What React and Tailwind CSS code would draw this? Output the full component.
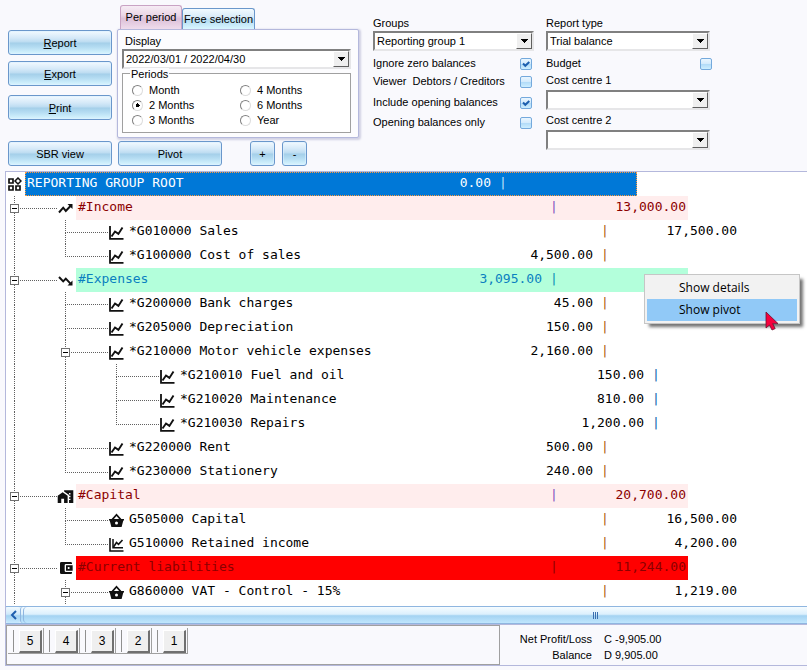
import React from "react";
import { MdHomeWork, MdAccountBalanceWallet } from "react-icons/md";

const glossy =
  "rounded-[3px] border border-[#6a97cb] bg-[linear-gradient(to_bottom,#f2faff_0%,#d5e9f8_30%,#bcdcf1_48%,#a4cfe9_52%,#b4dcf2_70%,#d9f6ff_100%)] text-center leading-[22px] shadow-[inset_0_0_0_1px_rgba(220,240,255,0.6)]";

function GlossyButton({ className = "", children, ...rest }) {
  return (
    <button type="button" className={`${glossy} h-[25px] ${className}`} {...rest}>
      {children}
    </button>
  );
}

function Select({ id, options, className = "", ...rest }) {
  return (
    <div
      className={`relative h-5 border-2 border-t-[#808080] border-l-[#808080] border-r-[#e6e6e8] border-b-[#e6e6e8] bg-white ${className}`}
    >
      <select id={id} className="block h-4 w-full appearance-none bg-white pl-0.5 leading-4 outline-none" {...rest}>
        {options.map((o) => (
          <option key={o}>{o}</option>
        ))}
      </select>
      <span className="pointer-events-none absolute top-0 right-0 flex h-4 w-4 items-center justify-center border border-t-white border-l-white border-r-[#606060] border-b-[#606060] bg-[#efefef]">
        <svg width="7" height="4" viewBox="0 0 7 4" shapeRendering="crispEdges">
          <path d="M0 0h7v1H6v1H5v1H4v1H3V3H2V2H1V1H0z" fill="#000" />
        </svg>
      </span>
    </div>
  );
}

function Check({ id, label, defaultChecked, className = "" }) {
  return (
    <div className={`flex items-center justify-between ${className}`}>
      <label htmlFor={id} className="whitespace-pre">
        {label}
      </label>
      <span className="relative h-3 w-3">
        <input
          id={id}
          type="checkbox"
          defaultChecked={defaultChecked}
          className="peer block h-3 w-3 appearance-none rounded-[2px] border border-[#74a9dc] bg-[linear-gradient(to_bottom,#eaf6ff_0%,#d2eafc_50%,#b3dcf8_55%,#cdeeff_100%)]"
        />
        <svg
          className="pointer-events-none absolute top-0 left-0 hidden peer-checked:block"
          width="12"
          height="12"
          viewBox="0 0 12 12"
        >
          <path d="M3 5.5l2.3 2.3L9.3 4" fill="none" stroke="#1d5fae" strokeWidth="2" />
        </svg>
      </span>
    </div>
  );
}

function Radio({ label, defaultChecked }) {
  return (
    <label className="flex h-[15px] items-center gap-1.5">
      <input
        type="radio"
        name="period"
        defaultChecked={defaultChecked}
        className="h-[11px] w-[11px] appearance-none rounded-full border border-t-[#808080] border-l-[#808080] border-r-[#dcdcdc] border-b-[#dcdcdc] bg-white checked:bg-[radial-gradient(circle,#000_0_2px,#fff_2px)]"
      />
      {label}
    </label>
  );
}

function Icon({ children }) {
  return (
    <svg width="15" height="15" viewBox="0 0 15 15" fill="none" stroke="currentColor">
      {children}
    </svg>
  );
}

const icons = {
  root: (
    <Icon>
      <path d="M2 2h4v4H2zM2 9h4v4H2zM9 9h4v4H9z" strokeWidth="1.7" />
      <path d="M11 1l3 3-3 3-3-3z" strokeWidth="1.5" />
    </Icon>
  ),
  up: (
    <Icon>
      <path d="M1 11.5l4.2-4.8 2.6 3.2L12.5 5" strokeWidth="2" />
      <path d="M9.5 3H14.5V8z" fill="currentColor" stroke="none" />
    </Icon>
  ),
  down: (
    <Icon>
      <path d="M1 4l4.2 4.4 2.6-2.8 4.7 5" strokeWidth="2" />
      <path d="M9.5 12.5H14.5V7.5z" fill="currentColor" stroke="none" />
    </Icon>
  ),
  home: <MdHomeWork size={17} />,
  basket: (
    <Icon>
      <path
        d="M0 6h2.6L7.5.6 12.4 6H15v1.6h-.7L12.6 14H2.4L.7 7.600H0zM7.500 3L4.900 6h5.200zM7.500 8.400a1.500 1.500 0 100 3 1.500 1.500 0 000-3z"
        fill="currentColor"
        fillRule="evenodd"
        stroke="none"
      />
    </Icon>
  ),
  wallet: <MdAccountBalanceWallet size={16} />,
  chart: (
    <Icon>
      <path d="M1 1v12.8h13.5" strokeWidth="1.8" />
      <path d="M2.5 11.5L6 6.500l3.400 2.400L13.500 2.500" strokeWidth="1.9" />
    </Icon>
  ),
  stacked: (
    <Icon>
      <path d="M1 1v13h13.5" strokeWidth="1.6" />
      <path d="M4 2v8.800h10" strokeWidth="1.5" />
      <path d="M4.500 10l3-4.500 2 1.800L13.500 3" strokeWidth="1.6" />
    </Icon>
  ),
};

const rose = "bg-[#ffeded] text-[#8b0000]";

// Guide codes, one per level: "|" passes through, "+" branches, "L" ends.
const rows = [
  { guides: "", icon: "root", label: "REPORTING GROUP ROOT", debit: "0.00", tone: "bg-[#0078d7] text-white outline-1 -outline-offset-1 outline-dotted outline-[#ff9a3c]", bar: "text-[#bfe0fa]" },
  { guides: "+", open: true, icon: "up", label: "#Income", credit: "13,000.00", tone: rose, bar: "text-[#8050c0]" },
  { guides: "|+", icon: "chart", label: "*G010000 Sales", credit: "17,500.00" },
  { guides: "|L", icon: "chart", label: "*G100000 Cost of sales", debit: "4,500.00" },
  { guides: "+", open: true, icon: "down", label: "#Expenses", debit: "3,095.00", tone: "bg-[#b3ffdb] text-[#0a80c0]", bar: "text-[#0a90b8]" },
  { guides: "|+", icon: "chart", label: "*G200000 Bank charges", debit: "45.00" },
  { guides: "|+", icon: "chart", label: "*G205000 Depreciation", debit: "150.00" },
  { guides: "|+", open: true, icon: "chart", label: "*G210000 Motor vehicle expenses", debit: "2,160.00" },
  { guides: "||+", icon: "chart", label: "*G210010 Fuel and oil", debit: "150.00", bar: "text-[#1068b0]" },
  { guides: "||+", icon: "chart", label: "*G210020 Maintenance", debit: "810.00", bar: "text-[#1068b0]" },
  { guides: "||L", icon: "chart", label: "*G210030 Repairs", debit: "1,200.00", bar: "text-[#1068b0]" },
  { guides: "|+", icon: "chart", label: "*G220000 Rent", debit: "500.00" },
  { guides: "|L", icon: "chart", label: "*G230000 Stationery", debit: "240.00" },
  { guides: "+", open: true, icon: "home", label: "#Capital", credit: "20,700.00", tone: rose, bar: "text-[#8050c0]" },
  { guides: "|+", icon: "basket", label: "G505000 Capital", credit: "16,500.00" },
  { guides: "|L", icon: "stacked", label: "G510000 Retained income", credit: "4,200.00" },
  { guides: "+", open: true, icon: "wallet", label: "#Current liabilities", credit: "11,244.00", tone: "bg-[#ff0000] text-[#8b0000]", bar: "text-[#8b0000]" },
  { guides: "|+", open: true, icon: "basket", label: "G860000 VAT - Control - 15%", credit: "1,219.00" },
];

function Guide({ code, open }) {
  const branch = code === "+" || code === "L";
  return (
    <span className="relative flex h-6 w-[51px] shrink-0 flex-col pl-2">
      <span className={`h-[13px] border-l border-dotted border-[#606060] ${branch ? "border-b" : ""}`} />
      {code !== "L" && <span className="h-[11px] border-l border-dotted border-[#606060]" />}
      {open && (
        <button
          type="button"
          aria-label="Collapse"
          className="absolute top-2 left-1 flex h-[9px] w-[9px] items-center justify-center border border-[#707070] bg-white"
        >
          <span className="h-px w-[5px] bg-black" />
        </button>
      )}
    </span>
  );
}

function TreeRow({ row }) {
  const levels = row.guides.split("");
  return (
    <li className="flex h-6">
      {levels.map((code, i) => (
        <Guide key={i} code={code} open={row.open && i === levels.length - 1} />
      ))}
      <span className="flex w-[19px] shrink-0 items-center justify-center pr-0.5 text-[#111]">{icons[row.icon]}</span>
      <span className={`flex w-[612px] shrink-0 px-0.5 leading-[22px] ${row.tone || "text-black"}`}>
        <span className="flex-1 whitespace-pre">{row.label}</span>
        <span>{row.debit}</span>
        <span className={`mr-4 ml-2 w-2 text-center ${row.bar || "text-[#b05c10]"}`}>|</span>
        <span className="w-28 text-right">{row.credit}</span>
      </span>
    </li>
  );
}

export default function App() {
  return (
    <div className="relative overflow-hidden bg-[#f9f9fd] pb-1 font-['Liberation_Sans',Arial,sans-serif] text-[11px] leading-[15px] text-black">
      <header className="flex">
        <div className="ml-2 shrink-0">
          <div className="flex gap-[5px]">
            <div className="flex w-[104px] flex-col pt-[30px]">
              <GlossyButton><u>R</u>eport</GlossyButton>
              <GlossyButton className="mt-1.5"><u>E</u>xport</GlossyButton>
              <GlossyButton className="mt-[9px]"><u>P</u>rint</GlossyButton>
            </div>
            <div className="w-[242px] pt-[5px]">
              <div role="tablist" className="flex items-end pl-[3px]">
                <button
                  type="button"
                  role="tab"
                  aria-selected="true"
                  className="h-6 w-[62px] rounded-t-[3px] border border-b-0 border-[#c9a3c4] bg-[linear-gradient(to_bottom,#f6ecf4_0%,#ead6e6_40%,#dcc0d8_55%,#efdcec_100%)]"
                >
                  Per period
                </button>
                <button
                  type="button"
                  role="tab"
                  aria-selected="false"
                  className="h-[21px] w-[73px] rounded-t-[3px] border border-b-0 border-[#6a97cb] bg-[linear-gradient(to_bottom,#f2faff_0%,#d5e9f8_45%,#b4dcf2_55%,#d9f6ff_100%)] whitespace-nowrap"
                >
                  Free selection
                </button>
              </div>
              <div className="h-[109px] rounded-[2px] border border-[#b4b8dc] bg-[#fcfcfe] px-1 pt-1 shadow-[1px_1px_2px_1px_rgba(150,150,190,0.4)]">
                <label htmlFor="display" className="block pl-[3px]">Display</label>
                <Select id="display" options={["2022/03/01 / 2022/04/30"]} className="w-[229px]" />
                <fieldset className="relative mt-1 h-[60px] w-[229px] border border-[#a0a0a0] bg-white">
                  <legend className="absolute -top-1.5 left-[7px] h-3 bg-[#fcfcfe] px-px leading-3">Periods</legend>
                  <div className="grid grid-cols-[108px_1fr] pt-[9px] pl-[9px]">
                    <Radio label="Month" />
                    <Radio label="4 Months" />
                    <Radio label="2 Months" defaultChecked />
                    <Radio label="6 Months" />
                    <Radio label="3 Months" />
                    <Radio label="Year" />
                  </div>
                </fieldset>
              </div>
            </div>
          </div>
          <div className="mt-[3px] mb-[5px] flex">
            <GlossyButton className="w-[104px]">SBR view</GlossyButton>
            <GlossyButton className="ml-1.5 w-[104px]">Pivot</GlossyButton>
            <GlossyButton className="ml-7 w-[25px]" aria-label="Expand">+</GlossyButton>
            <GlossyButton className="ml-[7px] w-[25px]" aria-label="Collapse all">-</GlossyButton>
          </div>
        </div>

        <div className="ml-[14px] w-[161px] shrink-0 pt-4">
          <label htmlFor="groups" className="block">Groups</label>
          <Select id="groups" options={["Reporting group 1"]} />
          <div className="pt-[5px] pr-0.5">
            <Check id="zero" label="Ignore zero balances" defaultChecked />
            <Check id="viewer" label="Viewer  Debtors / Creditors" className="mt-[3px]" />
            <Check id="include" label="Include opening balances" defaultChecked className="mt-1.5" />
            <Check id="only" label="Opening balances only" className="mt-[5px]" />
          </div>
        </div>

        <div className="ml-3 w-[164px] shrink-0 pt-4">
          <label htmlFor="type" className="block">Report type</label>
          <Select id="type" options={["Trial balance"]} />
          <Check id="budget" label="Budget" className="-mr-0.5 pt-[5px]" />
          <label htmlFor="cc1" className="mt-0.5 block">Cost centre 1</label>
          <Select id="cc1" options={[""]} className="mt-0.5" />
          <label htmlFor="cc2" className="mt-[3px] block">Cost centre 2</label>
          <Select id="cc2" options={[""]} className="mt-0.5" />
        </div>
      </header>

      <main className="relative ml-[5px] border-t border-l border-[#b4b8dc] bg-white">
        <ul className="h-[434px] overflow-hidden font-['DejaVu_Sans_Mono','Liberation_Mono',monospace] text-[13px]">
          {rows.map((row) => (
            <TreeRow key={row.label} row={row} />
          ))}
        </ul>

        <div className="flex h-[18px] border-y border-[#8fb6e0] bg-[#d8edfb]">
          <button
            type="button"
            aria-label="Scroll left"
            className="flex w-[14px] items-center justify-center rounded-[2px] bg-[linear-gradient(to_bottom,#f2faff_0%,#cfe8fa_45%,#a4d3f2_55%,#c9eaff_100%)]"
          >
            <svg width="7" height="10" viewBox="0 0 7 10" fill="none" stroke="#1f5fae" strokeWidth="2">
              <path d="M6 1L2 5l4 4" />
            </svg>
          </button>
          <div className="flex flex-1 items-center rounded-l-[3px] border-l border-[#8fb6e0] bg-[linear-gradient(to_bottom,#f6fcff_0%,#dcf0fd_45%,#a4d3f2_55%,#c0e6fd_100%)]">
            <span className="ml-0.5 h-4 w-1 rounded-l border-l border-[#8fb6e0]" />
            <span className="grow-[73]" />
            <span className="flex gap-px">
              <span className="h-[7px] w-px bg-[#3a6fb0]" />
              <span className="h-[7px] w-px bg-[#3a6fb0]" />
              <span className="h-[7px] w-px bg-[#3a6fb0]" />
            </span>
            <span className="grow-[27]" />
          </div>
        </div>

        <menu className="absolute top-[102px] left-[638px] w-[156px] border border-[#c6c6c6] bg-[#f2f2f2] p-0.5 font-['Open_Sans','Noto_Sans',sans-serif] text-[12px] leading-5 shadow-[4px_4px_3px_-1px_rgba(0,0,0,0.55)]">
          <li>
            <button type="button" className="block h-[22px] w-full pl-8 text-left">Show details</button>
          </li>
          <li>
            <button type="button" className="block h-[22px] w-full bg-[#91c9f7] pl-8 text-left">Show pivot</button>
          </li>
        </menu>
        <svg className="absolute top-[139px] left-[759px]" width="14" height="20" viewBox="0 0 14 20">
          <path d="M1 1v16l3.5-3 2.5 5 3.2-1.4-2.5-5H13z" fill="#f5003d" stroke="#6a1030" strokeWidth="0.8" />
        </svg>
      </main>

      <footer className="ml-[5px] flex border-y border-l border-[#b4b8dc]">
        <div className="h-10 w-[494px] shrink-0 border border-[#a0a0a0] pt-0.5 pl-px">
          <div className="flex h-[26px] w-[180px] border-b border-[#a0a0a0]">
            {["5", "4", "3", "2", "1"].map((n) => (
              <div key={n} className="flex w-9 border-r border-[#a0a0a0] pl-1">
                <span className="mt-0.5 h-[22px] w-0.5 border-r border-[#909090]" />
                <button
                  type="button"
                  className="mt-0.5 ml-[5px] h-[23px] w-[23px] border-t border-r-2 border-b-2 border-l border-t-white border-r-[#707070] border-b-[#707070] border-l-white bg-[#efefef] text-[12px] leading-5"
                >
                  {n}
                </button>
              </div>
            ))}
          </div>
        </div>
        <dl className="grid grid-cols-[92px_auto] content-start gap-x-3 pt-1.5 leading-4">
          <dt className="text-right">Net Profit/Loss</dt>
          <dd>C -9,905.00</dd>
          <dt className="text-right">Balance</dt>
          <dd>D 9,905.00</dd>
        </dl>
      </footer>
    </div>
  );
}
